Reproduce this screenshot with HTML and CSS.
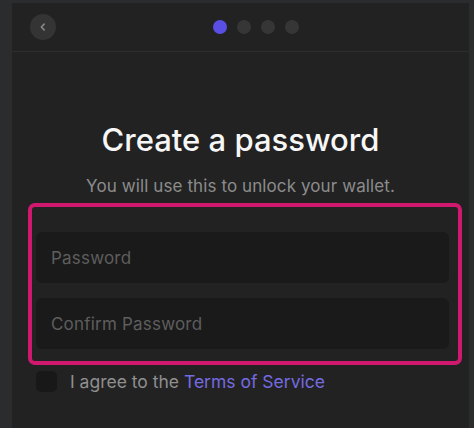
FILE: index.html
```html
<!DOCTYPE html>
<html>
<head>
<meta charset="utf-8">
<link rel="stylesheet" href="styles.css">
</head>
<body>
<div class="panel">
  <header class="header">
    <button class="back" aria-label="Back">
      <svg width="10" height="10" viewBox="0 0 10 10"><path d="M6.2 2 L3.4 5 L6.2 8" fill="none" stroke="#8a8a8a" stroke-width="1.6" stroke-linecap="round" stroke-linejoin="round"/></svg>
    </button>
    <div class="dots">
      <span class="dot active"></span>
      <span class="dot"></span>
      <span class="dot"></span>
      <span class="dot"></span>
    </div>
  </header>
  <main class="content">
    <h1 class="title">Create a password</h1>
    <p class="subtitle">You will use this to unlock your wallet.</p>
    <div class="fields">
      <div class="input">Password</div>
      <div class="input">Confirm Password</div>
    </div>
    <label class="agree">
      <span class="check"></span>
      <span class="agree-text">I agree to the <span class="link">Terms of Service</span></span>
    </label>
  </main>
</div>
</body>
</html>
```
FILE: styles.css
```css
html, body {
  margin: 0;
  padding: 0;
  height: 100%;
  background: #2b2c2e;
  font-family: Inter, "Noto Sans", sans-serif;
  overflow: hidden;
}
.panel {
  margin: 3px 0 0 12px;
  width: 457px;
  height: 425px;
  background: #222222;
}
.header {
  height: 48px;
  border-bottom: 1px solid #2d2d2d;
  display: flex;
  align-items: center;
  padding-left: 18px;
}
.back {
  width: 26px;
  height: 26px;
  border-radius: 50%;
  background: #343434;
  border: none;
  padding: 0;
  display: flex;
  align-items: center;
  justify-content: center;
}
.dots {
  display: flex;
  gap: 10px;
  margin-left: 157px;
}
.dot {
  width: 14px;
  height: 14px;
  border-radius: 50%;
  background: #363636;
}
.dot.active {
  background: #5a4fe4;
}
.content {
  display: flex;
  flex-direction: column;
  align-items: stretch;
}
.title {
  margin: 68px 0 0;
  font-size: 31px;
  line-height: 40px;
  font-weight: 500;
  color: #f7f7f7;
  text-align: center;
  letter-spacing: 0;
}
.subtitle {
  margin: 16px 0 0;
  font-size: 17px;
  line-height: 20px;
  color: #8c8c8c;
  text-align: center;
  letter-spacing: 0.1px;
}
.fields {
  margin: 7px 7px 0 16px;
  border: 4px solid #d0196e;
  border-radius: 7px;
  padding: 25px 9px 12px 4px;
  display: flex;
  flex-direction: column;
  gap: 15px;
}
.input {
  height: 51px;
  border-radius: 6px;
  background: #1a1a1a;
  color: #5e5e5e;
  font-size: 17px;
  letter-spacing: 0.2px;
  display: flex;
  align-items: center;
  padding-left: 15px;
}
.agree {
  display: flex;
  align-items: center;
  gap: 13px;
  margin: 6px 0 0 24px;
}
.check {
  width: 21px;
  height: 21px;
  border-radius: 5px;
  background: #181818;
}
.agree-text {
  font-size: 17.5px;
  color: #8f8f8f;
}
.link {
  color: #756be0;
}
```
